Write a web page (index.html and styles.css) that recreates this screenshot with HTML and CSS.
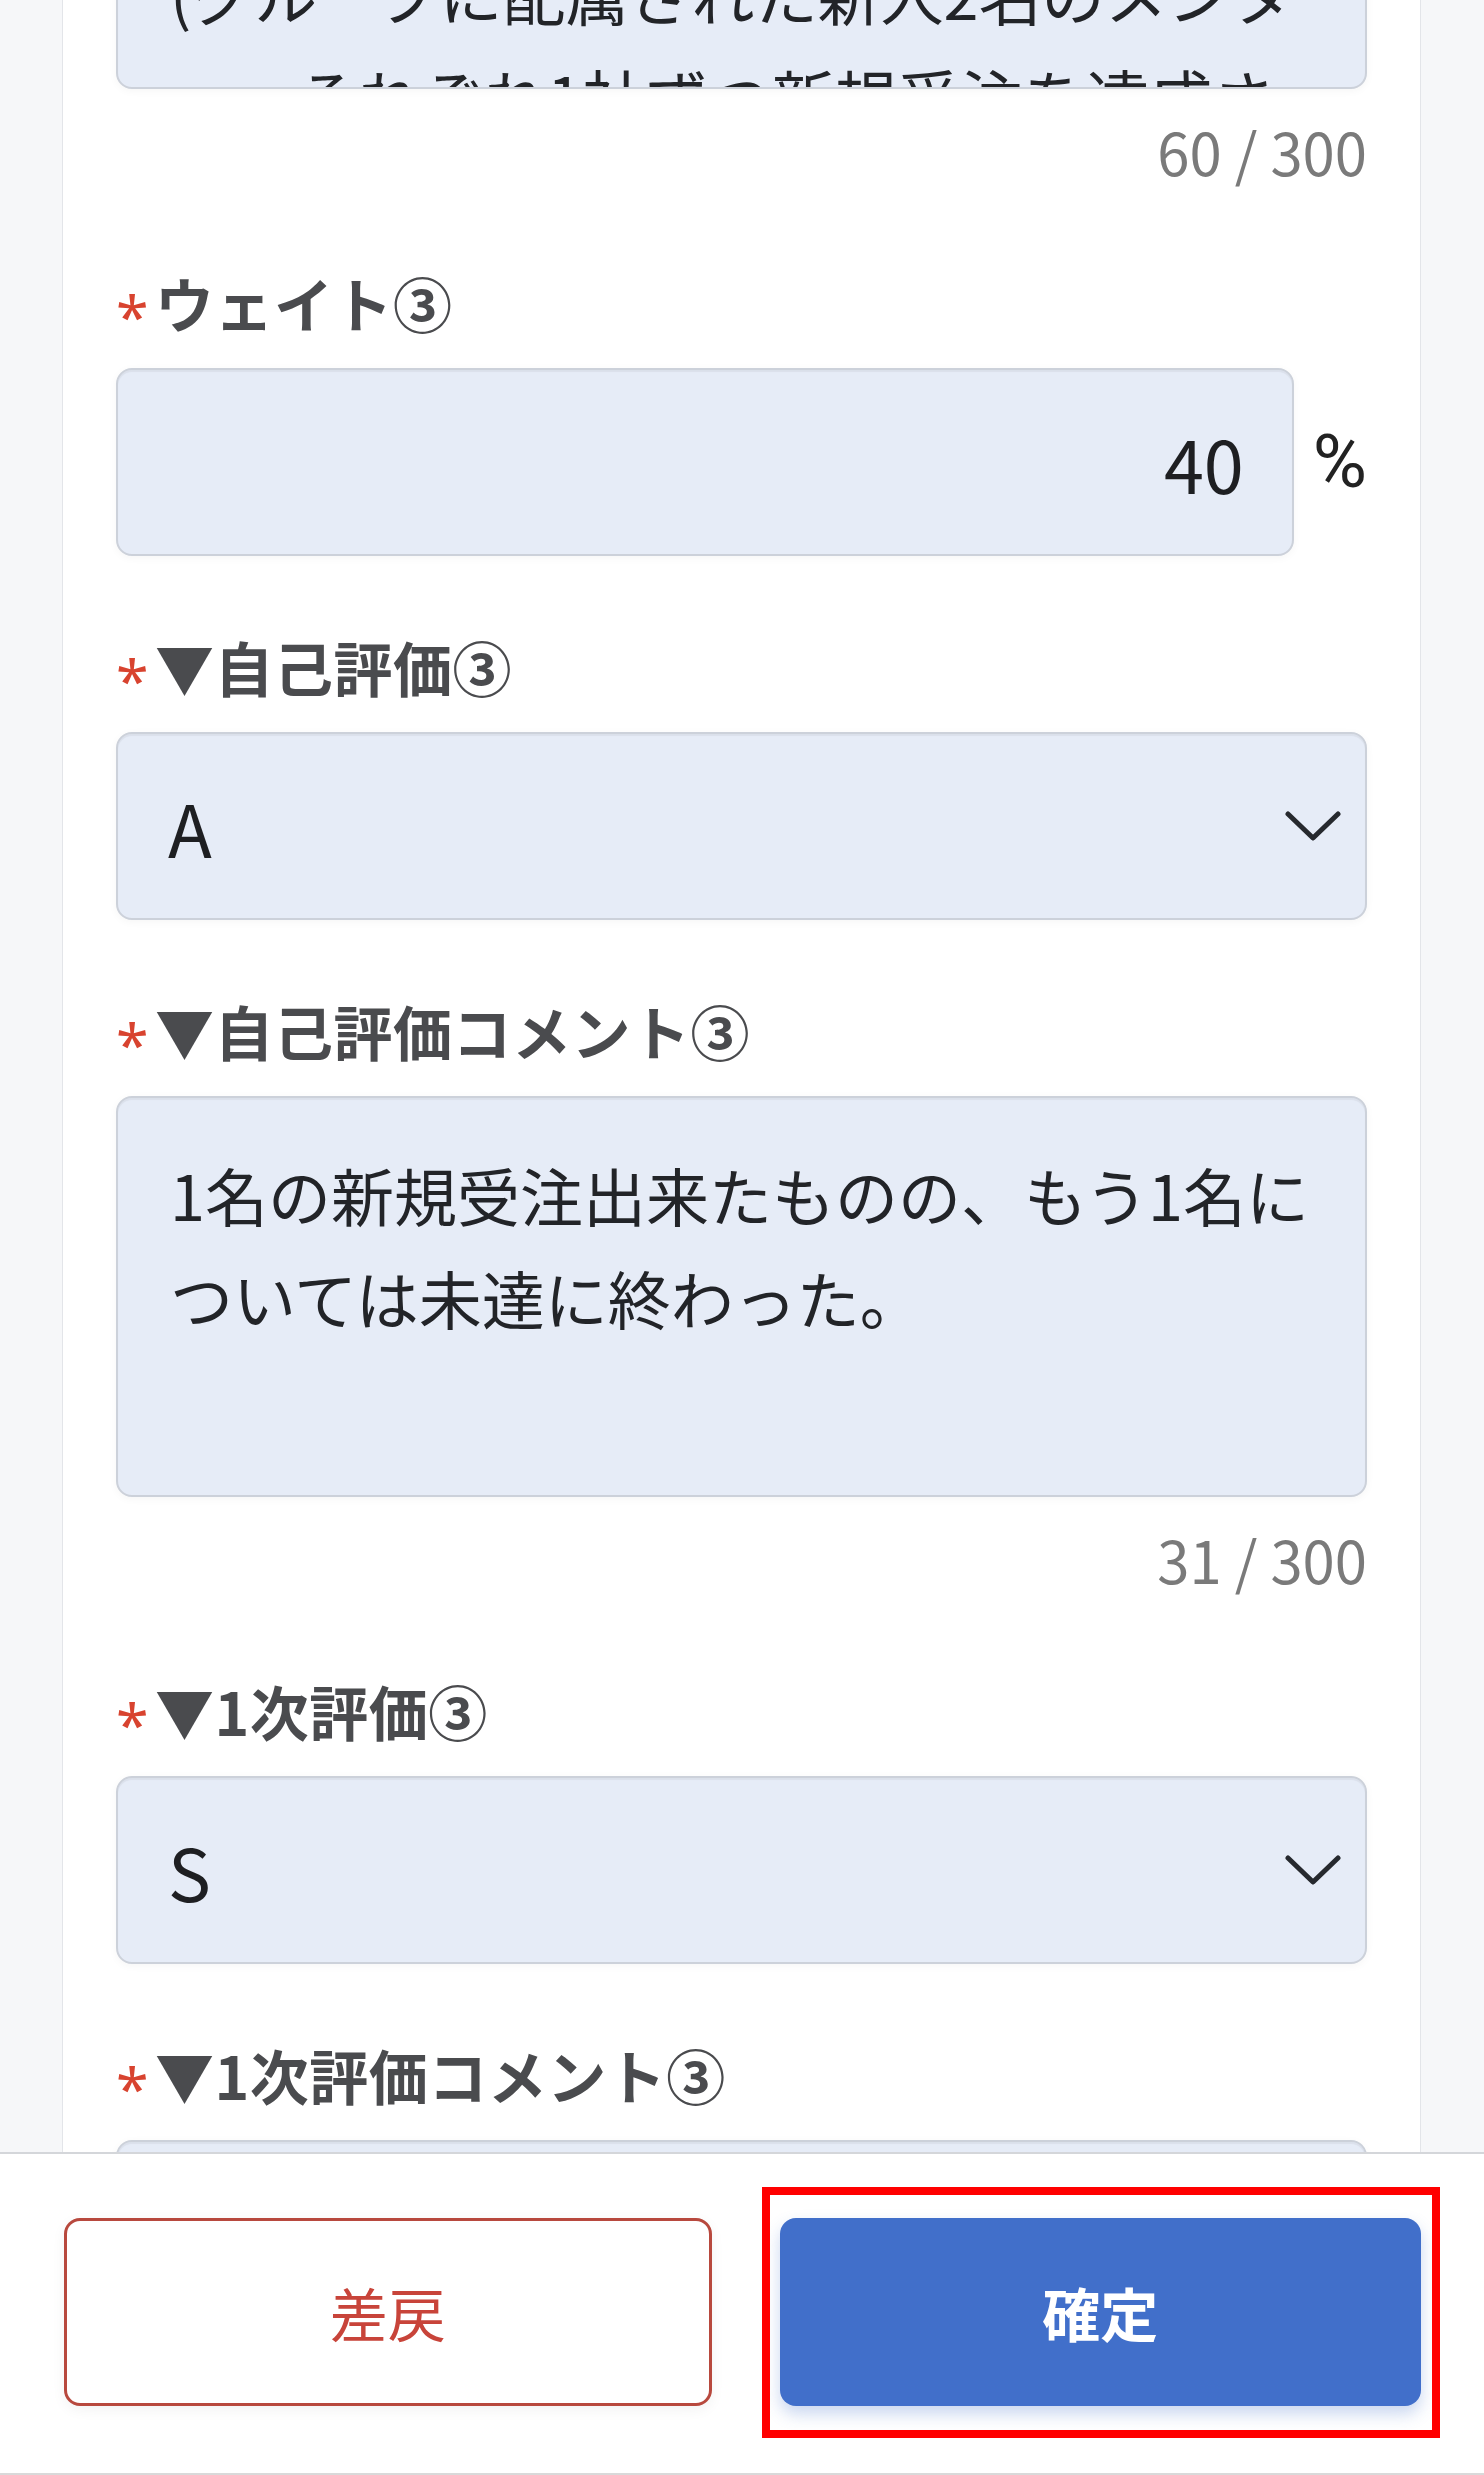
FILE: index.html
```html
<!DOCTYPE html>
<html lang="ja">
<head>
<meta charset="utf-8">
<title>評価入力</title>
<link rel="stylesheet" href="styles.css">
</head>
<body>
<div class="app">
  <main class="scroll">
    <div class="card">
      <div class="field">
        <div class="box textarea textarea-scrolled">
          <div class="text">(グループに配属された新人2名のメンタ<br>ー、それぞれ1社ずつ新規受注を達成さ</div>
        </div>
        <div class="counter">60 / 300</div>
      </div>

      <div class="field">
        <div class="label"><span class="req">*</span>ウェイト③</div>
        <div class="weight-row">
          <div class="box input input-number">40</div>
          <span class="unit">%</span>
        </div>
      </div>

      <div class="field">
        <div class="label"><span class="req">*</span>▼自己評価③</div>
        <div class="box input select">
          <span class="value">A</span>
          <svg class="chev" viewBox="0 0 56 30" aria-hidden="true"><path d="M3 3 L28 27 L53 3" fill="none" stroke="#26292e" stroke-width="5" stroke-linecap="round" stroke-linejoin="round"/></svg>
        </div>
      </div>

      <div class="field">
        <div class="label"><span class="req">*</span>▼自己評価コメント③</div>
        <div class="box textarea">
          <div class="text">1名の新規受注出来たものの、もう1名に<br>ついては未達に終わった。</div>
        </div>
        <div class="counter">31 / 300</div>
      </div>

      <div class="field">
        <div class="label"><span class="req">*</span>▼1次評価③</div>
        <div class="box input select">
          <span class="value">S</span>
          <svg class="chev" viewBox="0 0 56 30" aria-hidden="true"><path d="M3 3 L28 27 L53 3" fill="none" stroke="#26292e" stroke-width="5" stroke-linecap="round" stroke-linejoin="round"/></svg>
        </div>
      </div>

      <div class="field">
        <div class="label"><span class="req">*</span>▼1次評価コメント③</div>
        <div class="box textarea"></div>
      </div>
    </div>
  </main>

  <footer class="footer">
    <button class="btn btn-return" type="button">差戻</button>
    <button class="btn btn-confirm" type="button">確定</button>
  </footer>
</div>
</body>
</html>
```

FILE: styles.css
```css
html, body {
  margin: 0;
  padding: 0;
  background: #ffffff;
}

body {
  font-family: "Noto Sans CJK JP", "Noto Sans", sans-serif;
  color: #222222;
}

.app {
  height: 2475px;
  display: flex;
  flex-direction: column;
  overflow: hidden;
}

.scroll {
  flex: 1 1 auto;
  min-height: 0;
  overflow: hidden;
  background: #f6f7f9;
}

.card {
  margin: 0 63px 0 62px;
  padding: 0 53px;
  background: #ffffff;
  border-left: 1px solid #e3e5e9;
  border-right: 1px solid #e3e5e9;
  display: flex;
  flex-direction: column;
  gap: 83px;
}

.field {
  display: flex;
  flex-direction: column;
}

.label {
  font-size: 59px;
  font-weight: 700;
  line-height: 56px;
  height: 64px;
  margin-bottom: 29px;
  color: #4a4b4e;
  white-space: nowrap;
  letter-spacing: 0.5px;
}

.req {
  color: #d8432f;
  font-weight: 400;
  font-family: "Noto Sans", sans-serif;
  vertical-align: -0.18em;
  margin-right: 6px;
}

.box {
  box-sizing: border-box;
  background: #e6ecf7;
  border: 2px solid #ccd1da;
  border-radius: 16px;
  box-shadow: 0 2px 8px rgba(0, 0, 0, 0.04), inset 0 2px 1px rgba(0, 0, 0, 0.05);
}

.input {
  height: 188px;
  display: flex;
  align-items: center;
  font-size: 72px;
  color: #1e1f22;
  padding: 0 48px 0 50px;
}

.weight-row {
  display: flex;
  align-items: center;
  gap: 19px;
}

.input-number {
  flex: 1 1 auto;
  justify-content: flex-end;
}

.unit {
  font-family: Roboto, "Noto Sans", sans-serif;
  font-size: 74px;
  color: #222222;
  line-height: 1;
}

.select {
  justify-content: space-between;
  padding-right: 24px;
}

.chev {
  width: 56px;
  height: 30px;
  display: block;
}

.textarea {
  height: 401px;
  padding: 44px 52px 0;
  font-size: 63px;
  line-height: 103px;
  color: #222428;
  overflow: hidden;
  white-space: nowrap;
}

.textarea-scrolled {
  height: 150px;
  margin-top: -61px;
  padding-top: 0;
}

.counter {
  text-align: right;
  font-size: 58px;
  line-height: 64px;
  color: #7a7a7a;
  padding: 30px 0 9px;
}

.footer {
  flex: 0 0 auto;
  height: 323px;
  box-sizing: border-box;
  background: #ffffff;
  border-top: 2px solid #d4d6da;
  border-bottom: 2px solid #d9d9d9;
  padding: 64px 63px 0 64px;
  display: flex;
  align-items: flex-start;
  gap: 68px;
}

.btn {
  flex: 1 1 0;
  height: 188px;
  box-sizing: border-box;
  border-radius: 16px;
  font-family: "Noto Sans CJK JP", "Noto Sans", sans-serif;
  font-size: 58px;
  display: flex;
  align-items: center;
  justify-content: center;
  padding: 0;
  margin: 0;
  cursor: pointer;
}

.btn-return {
  background: #ffffff;
  border: 3px solid #b8493e;
  color: #c8443a;
  font-weight: 400;
  box-shadow: 0 4px 14px rgba(0, 0, 0, 0.05);
}

.btn-confirm {
  position: relative;
  background: #416fca;
  border: none;
  color: #ffffff;
  font-weight: 700;
  box-shadow: 0 8px 16px rgba(65, 111, 202, 0.28);
}

.btn-confirm::after {
  content: "";
  position: absolute;
  top: -31px;
  right: -19px;
  bottom: -32px;
  left: -18px;
  border: 8px solid #ff0000;
  pointer-events: none;
}
```
